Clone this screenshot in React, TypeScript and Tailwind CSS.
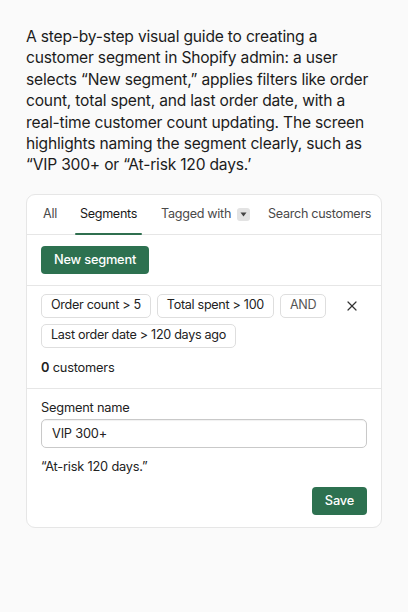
import { X } from 'lucide-react';

const chip = 'h-[24px] px-[9px] flex items-center whitespace-nowrap rounded-[5px] border border-[#dedede] bg-white text-[12.6px] tracking-[-0.3px] text-[#222]';

export default function App() {
  return (
    <div className="min-h-[612px] w-[408px] bg-[#fafafa] px-[26px] pt-[26px] text-[#1a1a1a]" style={{ fontFamily: 'Inter, "Noto Sans", sans-serif' }}>
      <p className="w-[350px] text-[15.6px] leading-[21.4px] tracking-[-0.2px] text-[#1c1c1c]">
        A step-by-step visual guide to creating a customer segment in Shopify admin: a user selects “New segment,” applies filters like order count, total spent, and last order date, with a real-time customer count updating. The screen highlights naming the segment clearly, such as “VIP 300+ or “At-risk 120 days.’
      </p>

      <div className="mt-[18px] w-[356px] rounded-[9px] border border-[#e6e6e6] bg-white">
        <div className="flex h-[40px] items-center whitespace-nowrap border-b border-[#e6e6e6] pl-[16px] text-[12.6px] tracking-[-0.3px] text-[#4a4a4a]">
          <span>All</span>
          <span className="relative ml-[18px] flex h-full items-center px-[5px] text-[#1a1a1a]">
            Segments
            <span className="absolute bottom-[-1px] left-0 right-0 h-[2px] rounded-full bg-[#2f6f4f]" />
          </span>
          <span className="ml-[19px] flex items-center">
            Tagged with
            <span className="ml-[6px] flex h-[13px] w-[13px] items-center justify-center rounded-[3px] bg-[#e3e3e3]">
              <svg width="7" height="5" viewBox="0 0 7 5"><path d="M0.5 0.5h6L3.5 4.5z" fill="#444" /></svg>
            </span>
          </span>
          <span className="ml-[18px]">Search customers</span>
        </div>

        <div className="border-b border-[#e6e6e6] px-[14px] py-[11px]">
          <button className="h-[28px] rounded-[4px] bg-[#2d7150] px-[13px] text-[12.8px] font-medium tracking-[-0.2px] text-white">
            New segment
          </button>
        </div>

        <div className="border-b border-[#e6e6e6] px-[14px] pt-[8px] pb-[11px]">
          <div className="flex items-center gap-[6px]">
            <span className={chip}>Order count &gt; 5</span>
            <span className={chip}>Total spent &gt; 100</span>
            <span className={chip + ' text-[#555]'}>AND</span>
            <X className="ml-auto mr-[7px] h-[16px] w-[16px] shrink-0 text-[#333]" strokeWidth={1.8} />
          </div>
          <div className="mt-[6px] flex">
            <span className={chip}>Last order date &gt; 120 days ago</span>
          </div>
          <div className="mt-[10px] text-[12.8px] tracking-[-0.2px] text-[#222]">
            <span className="font-semibold">0</span> customers
          </div>
        </div>

        <div className="px-[14px] pt-[11px] pb-[12px] text-[12.8px] leading-[16px] tracking-[-0.2px]">
          <div className="text-[#222]">Segment name</div>
          <div className="mt-[3px] flex h-[29px] items-center rounded-[5px] border border-[#c9c9c9] px-[10px] text-[#222] shadow-[inset_0_1px_1px_rgba(0,0,0,0.06)]">
            VIP 300+
          </div>
          <div className="mt-[11px] text-[#222]">“At-risk 120 days.”</div>
          <div className="mt-[12px] flex justify-end">
            <button className="h-[28px] rounded-[4px] bg-[#2d7150] px-[13px] font-medium text-white">
              Save
            </button>
          </div>
        </div>
      </div>
    </div>
  );
}
